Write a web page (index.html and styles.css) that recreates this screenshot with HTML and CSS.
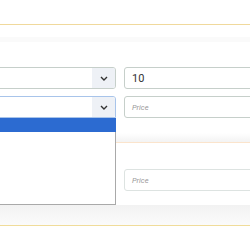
FILE: index.html
```html
<!DOCTYPE html>
<html>
<head>
<meta charset="utf-8">
<link rel="stylesheet" href="styles.css">
</head>
<body>
<div class="page">
  <div class="top"></div>
  <div class="section s1">
    <div class="band-soft"></div>
    <div class="rows">
      <div class="row">
        <div class="select">
          <span class="sel-text"></span>
          <span class="chev"><svg width="8" height="5" viewBox="0 0 8 5"><path d="M1 1 L4 4 L7 1" fill="none" stroke="#333" stroke-width="1.4"/></svg></span>
        </div>
        <div class="input"><span class="val">10</span></div>
      </div>
      <div class="row">
        <div class="select focus">
          <span class="sel-text"></span>
          <span class="chev"><svg width="8" height="5" viewBox="0 0 8 5"><path d="M1 1 L4 4 L7 1" fill="none" stroke="#333" stroke-width="1.4"/></svg></span>
          <div class="dropdown">
            <div class="opt active"></div>
          </div>
        </div>
        <div class="input"><span class="ph">Price</span></div>
      </div>
    </div>
    <div class="band"></div>
  </div>
  <div class="section s2">
    <div class="rows r2">
      <div class="row">
        <div class="spacer"></div>
        <div class="input"><span class="ph">Price</span></div>
      </div>
    </div>
    <div class="band tall"></div>
  </div>
  <div class="section s3"></div>
</div>
</body>
</html>
```
FILE: styles.css
```css
html, body {
  margin: 0;
  padding: 0;
  background: #fff;
  overflow: hidden;
  width: 250px;
  height: 250px;
}
.page {
  font-family: Roboto, "Liberation Sans", sans-serif;
}
.top {
  height: 24px;
}
.section {
  border-top: 1px solid #f0d99c;
}
.s2 {
  border-top-color: #fbe4cc;
}
.band-soft {
  margin-top: 12px;
  height: 5px;
  background: #fafafa;
}
.rows {
  padding-top: 25px;
  padding-bottom: 15px;
  display: flex;
  flex-direction: column;
  gap: 7px;
}
.r2 {
  padding-top: 26px;
  padding-bottom: 14px;
}
.row {
  display: flex;
  gap: 8px;
  margin-left: -20px;
  height: 22px;
}
.select, .spacer {
  width: 136px;
  flex: none;
  box-sizing: border-box;
  position: relative;
}
.select {
  border: 1px solid #c6cfca;
  border-radius: 3px;
  display: flex;
  justify-content: flex-end;
}
.select.focus {
  border-color: #a8c4ea;
  border-radius: 3px 3px 0 0;
}
.chev {
  width: 23px;
  background: #eef1f6;
  display: flex;
  align-items: center;
  justify-content: center;
  border-radius: 0 2px 2px 0;
}
.input {
  width: 150px;
  flex: none;
  box-sizing: border-box;
  border: 1px solid #c6cfca;
  border-radius: 3px;
  display: flex;
  align-items: center;
  padding-left: 7px;
}
.s2 .input {
  border-color: #dde3e1;
}
.val {
  font-size: 11px;
  color: #333;
}
.ph {
  font-size: 7.5px;
  font-style: italic;
  color: #9a9a9a;
}
.dropdown {
  position: absolute;
  left: -1px;
  right: -1px;
  top: 21px;
  height: 87px;
  box-sizing: border-box;
  border: 1px solid #a9a9a9;
  border-top: none;
  background: #fff;
  z-index: 5;
}
.opt.active {
  height: 14px;
  background: #2c6bd1;
  margin: 0 -1px;
}
.band {
  height: 9px;
  background: linear-gradient(#fff, #f3f3f3);
}
.band.tall {
  height: 20px;
  background: linear-gradient(#f2f2f2, #fbfbfb);
}
.s3 {
  border-top-color: #f0dc9a;
  height: 30px;
}
```
